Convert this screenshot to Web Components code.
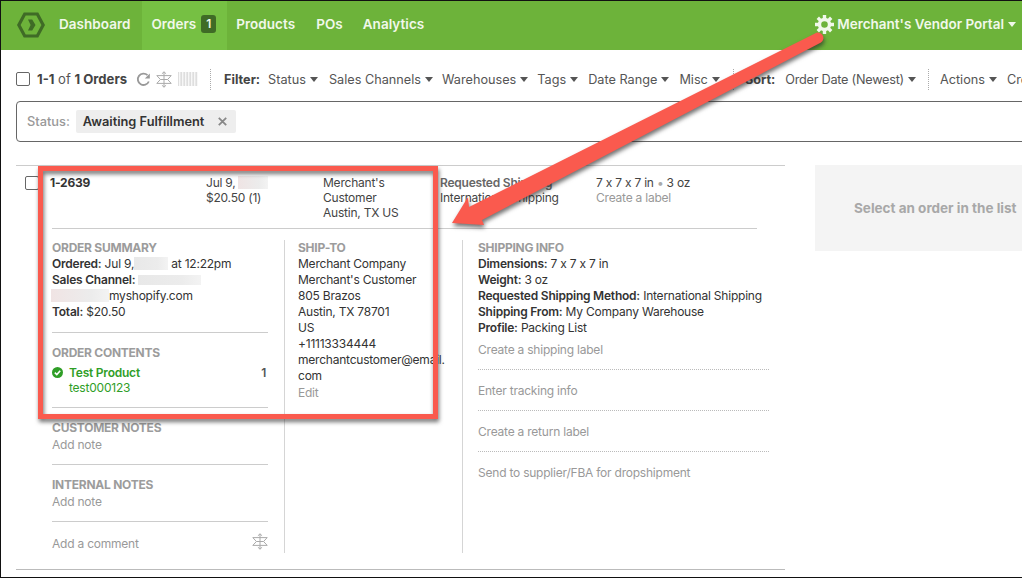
<!DOCTYPE html>
<html>
<head>
<meta charset="utf-8">
<title>Orders</title>
<style>
  html, body { margin: 0; padding: 0; background: #fff; }
  body { font-family: Inter, "Liberation Sans", sans-serif; font-size: 12px; letter-spacing: -.22px; color: #333; }
</style>
</head>
<body>
<vendor-app></vendor-app>

<script>
(function () {
    const SNOW = `<svg width="16" height="17" viewBox="0 0 16 17" fill="none" stroke="currentColor" stroke-width="1">
        <path d="M8 .8V16.2M5.900 2.800 8 .8l2.100 2M5.900 14.200 8 16.200l2.100-2"/>
        <path d="M.8 4.600h14.400L11.600 8.500l3.600 3.900H.8L4.400 8.500z"/>
        <path d="M4.400 8.500h7.200"/>
    </svg>`;

    class BaseElement extends HTMLElement {
        constructor() {
            super();
            this.attachShadow({ mode: "open" });
            this.shadowRoot.innerHTML = this.render();
        }
        render() {
            return "<slot></slot>";
        }
    }

    class NavItem extends BaseElement {
        render() {
            return `<style>
                :host { display: flex; align-items: center; height: 100%; padding: 0 var(--pr, 10px) 3px var(--pl, 10px); box-sizing: border-box;
                    color: #f1f8ea; font-weight: 600; font-size: 13.5px; letter-spacing: .03px; }
                :host([active]) { background: #76c043; }
                .badge { display: none; margin-left: 5px; width: 15px; height: 18px; line-height: 18px; border-radius: 3px;
                    background: #3f6b26; text-align: center; font-size: 12px; }
                :host([badge]) .badge { display: block; }
            </style><slot></slot><span class="badge">${this.getAttribute("badge") || ""}</span>`;
        }
    }

    class TopNav extends BaseElement {
        render() {
            return `<style>
                :host { display: flex; height: 49px; background: #6db33a; align-items: stretch; }
                .logo { margin: 11px 6px 0 16px; width: 28px; height: 26px; }
                .right { margin-left: auto; display: flex; align-items: center; padding: 0 6px 3px 0; color: #f1f8ea; font-weight: 600; font-size: 13.5px; letter-spacing: 0; }
                .gear { margin-right: 3px; }
                .caret { margin-left: 4px; border: 4.500px solid transparent; border-top: 5px solid #f1f8ea; border-bottom: 0; }
            </style>
            <svg class="logo" viewBox="0 0 28 26">
                <path d="M1.800 13 7.700 2h12.600l5.900 11-5.900 11H7.700z" fill="none" stroke="#3f6b26" stroke-width="3.200"/>
                <path d="M11 7.500h4.200l3.300 5.500-3.300 5.500H11l2.600-5.500z" fill="#3f6b26"/>
            </svg>
            <nav-item style="--pl:8px;--pr:12px">Dashboard</nav-item>
            <nav-item active badge="1" style="--pl:9px;--pr:11px">Orders</nav-item>
            <nav-item style="--pl:9px;--pr:9px">Products</nav-item>
            <nav-item style="--pl:12px;--pr:10px">POs</nav-item>
            <nav-item style="--pl:10px">Analytics</nav-item>
            <div class="right">
                <svg class="gear" width="19" height="19" viewBox="0 0 19 19">
                    <circle cx="9.500" cy="9.500" r="5" fill="none" stroke="#f1f8ea" stroke-width="3.400"/>
                    <g stroke="#f1f8ea" stroke-width="3.400">
                        <path d="M9.500 0v4M9.500 15v4M0 9.500h4M15 9.500h4M2.800 2.800l2.800 2.800M13.400 13.400l2.800 2.800M2.800 16.200l2.800-2.800M13.400 5.600l2.800-2.800"/>
                    </g>
                </svg>
                Merchant's Vendor Portal<span class="caret"></span>
            </div>`;
        }
    }

    class DropMenu extends BaseElement {
        render() {
            return `<style>
                :host { display: inline-flex; align-items: center; white-space: nowrap; color: #555; margin-right: 10px; }
                .caret { margin-left: 4px; border: 4.500px solid transparent; border-top: 5px solid #555; border-bottom: 0; }
            </style><slot></slot><span class="caret"></span>`;
        }
    }

    class OrderToolbar extends BaseElement {
        render() {
            return `<style>
                :host { display: flex; align-items: center; height: 51px; padding: 7px 0 0 15px; box-sizing: border-box; overflow: hidden; white-space: nowrap; color: #555;
                    font-size: 12.700px; letter-spacing: 0; }
                .box { width: 12px; height: 12px; border: 1px solid #666; border-radius: 2px; margin-right: 7px; flex: none; }
                .count { color: #555; margin-right: 9px; font-size: 13.100px; }
                .count b { font-weight: 700; color: #444; }
                .refresh { margin-right: 5px; flex: none; color: #999; }
                .snow { color: #aaa; display: flex; margin-right: 6px; }
                .bars { width: 20px; height: 14px; flex: none; opacity: .6;
                    background: repeating-linear-gradient(90deg, #c8c8c8 0 1px, #f2f2f2 1px 2px, #d8d8d8 2px 3px); }
                .sep { height: 21px; border-left: 1px dotted #aaa; margin: 0 13px 0 12px; flex: none; }
                .sep.b { margin: 0 11px 0 3px; }
                b.label { font-weight: 700; color: #444; margin-right: 8px; }
            </style>
            <span class="box"></span>
            <span class="count"><b>1-1</b> of <b>1 Orders</b></span>
            <svg class="refresh" width="15" height="15" viewBox="0 0 15 15" fill="none" stroke="currentColor" stroke-width="1.800">
                <path d="M12.800 9.500A5.700 5.700 0 1 1 11.500 3.200"/><path d="M13.800 1.500v5h-5z" fill="currentColor" stroke="none"/>
            </svg>
            <span class="snow">${SNOW}</span>
            <span class="bars"></span>
            <span class="sep"></span>
            <b class="label">Filter:</b>
            <drop-menu style="margin-right:11px">Status</drop-menu>
            <drop-menu style="margin-right:9px">Sales Channels</drop-menu>
            <drop-menu style="margin-right:9px">Warehouses</drop-menu>
            <drop-menu>Tags</drop-menu>
            <drop-menu>Date Range</drop-menu>
            <drop-menu>Misc</drop-menu>
            <span class="sep b"></span>
            <b class="label" style="margin-right:10px">Sort:</b>
            <drop-menu style="margin-right:0;letter-spacing:-.25px">Order Date (Newest)</drop-menu>
            <span class="sep" style="margin:0 11px 0 12px"></span>
            <drop-menu>Actions</drop-menu>
            <span>Create</span>`;
        }
    }

    class FilterBox extends BaseElement {
        render() {
            return `<style>
                :host { display: flex; align-items: center; height: 41px; box-sizing: border-box; margin: 0 -10px 0 15px;
                    border: 1px solid #666; border-radius: 4px; padding-left: 10px; font-size: 12.800px; letter-spacing: 0; }
                .key { color: #999; font-weight: 500; margin-right: 6px; }
                .chip { display: flex; align-items: center; height: 23px; background: #eee; border-radius: 2px; padding: 0 9px 0 7px; color: #333; font-weight: 600; }
                svg { margin-left: 14px; }
            </style>
            <span class="key">Status:</span>
            <span class="chip"><slot></slot>
                <svg width="9" height="9" viewBox="0 0 9 9" stroke="#888" stroke-width="1.800"><path d="M.8.8l7.400 7.400M8.200.8.800 8.200"/></svg>
            </span>`;
        }
    }

    class BlurBlock extends BaseElement {
        render() {
            return `<style>
                :host { display: inline-block; height: 13px; vertical-align: -2px;
                    background: linear-gradient(90deg, var(--c, #e8e8e8), #ececec 70%, #f3f3f3); }
            </style>`;
        }
    }

    class OrderRow extends BaseElement {
        render() {
            return `<style>
                :host { display: grid; grid-template-columns: 25px 156px 117px 117px 156px 1fr; line-height: 15px; padding: 9px 0 8px 9px; color: #444; }
                .box { width: 12px; height: 12px; border: 1px solid #666; border-radius: 2px; margin-top: 1px; }
            </style>
            <span class="box"></span>
            <slot></slot>`;
        }
    }

    class DetailSection extends BaseElement {
        render() {
            return `<style>
                :host { display: block; border-top: 1px solid #ccc; padding: 12px 0 10px; line-height: 16px; color: #333; }
                :host([first]) { border-top: 0; padding: 0 0 12px; }
                :host([plain]) { border-top: 0; padding: 0; }
                :host(:last-child) { padding-bottom: 0; }
                h4 { margin: 0; font-size: 12px; font-weight: 700; color: #9c9c9c; letter-spacing: -.25px; line-height: 16px; }
            </style>
            <h4>${this.getAttribute("heading") || ""}</h4>
            <slot></slot>`;
        }
    }

    class ActionLink extends BaseElement {
        render() {
            return `<style>
                :host { display: block; color: #999; line-height: 16px; padding: 13px 0 11px; border-bottom: 1px dotted #bbb; }
                :host(:first-child) { padding-top: 6px; }
                :host(:last-child) { border-bottom: 0; }
            </style><slot></slot>`;
        }
    }

    class OrderDetail extends BaseElement {
        render() {
            return `<style>
                :host { display: grid; column-gap: 0; grid-template-columns: 232px 178px 1fr; margin: 11px 0 17px 36px; height: 313px; }
                .col { box-sizing: border-box; min-height: 0; }
                .a { padding-right: 16px; }
                .b { border-left: 1px solid #d5d5d5; padding-left: 13px; }
                .c { border-left: 1px solid #d5d5d5; padding: 0 16px 0 15px; }
                .green { color: #2f9e27; }
                .product { display: grid; grid-template-columns: 17px 1fr auto; margin-top: 4px; line-height: 15px; }
                .product b { font-weight: 600; }
                .qty { font-weight: 600; color: #555; padding-right: 2px; }
                .check { margin-top: 2px; }
                .sku { grid-column: 2; }
                .add { display: block; margin: 1px 0; color: #999; }
                .comment { display: flex; justify-content: space-between; color: #999; padding-top: 2px; align-items: flex-start; }
                .comment span { color: #aaa; margin-top: -3px; display: flex; }
                .email { word-break: break-all; width: 150px; }
                .edit { color: #999; margin-top: 1px; }
                b { font-weight: 600; }
            </style>
            <div class="col a">
                <detail-section first heading="ORDER SUMMARY">
                    <div><b>Ordered:</b> Jul 9,<blur-block style="width:34px"></blur-block> at 12:22pm</div>
                    <div><b>Sales Channel:</b> <blur-block style="width:63px;height:10px;vertical-align:-1px"></blur-block></div>
                    <div><blur-block style="width:58px;--c:#f0e4e4;margin-left:-1px"></blur-block>myshopify.com</div>
                    <div><b>Total:</b> $20.50</div>
                </detail-section>
                <detail-section heading="ORDER CONTENTS" style="padding-bottom:12px">
                    <div class="product green">
                        <svg class="check" width="11" height="11" viewBox="0 0 11 11"><circle cx="5.500" cy="5.500" r="5.500" fill="#2f9e27"/><path d="M2.800 5.700 4.800 7.600 8.200 3.800" fill="none" stroke="#fff" stroke-width="1.600"/></svg>
                        <b>Test Product</b>
                        <span class="qty">1</span>
                        <span class="sku">test000123</span>
                    </div>
                </detail-section>
                <detail-section heading="CUSTOMER NOTES"><span class="add">Add note</span></detail-section>
                <detail-section heading="INTERNAL NOTES"><span class="add">Add note</span></detail-section>
                <detail-section>
                    <div class="comment">Add a comment<span>${SNOW}</span></div>
                </detail-section>
            </div>
            <div class="col b">
                <detail-section plain heading="SHIP-TO">
                    <div>Merchant Company</div>
                    <div>Merchant's Customer</div>
                    <div>805 Brazos</div>
                    <div>Austin, TX 78701</div>
                    <div>US</div>
                    <div>+11113334444</div>
                    <div class="email">merchantcustomer@email.com</div>
                    <div class="edit">Edit</div>
                </detail-section>
            </div>
            <div class="col c">
                <detail-section plain heading="SHIPPING INFO">
                    <div><b>Dimensions:</b> 7 x 7 x 7 in</div>
                    <div><b>Weight:</b> 3 oz</div>
                    <div><b>Requested Shipping Method:</b> International Shipping</div>
                    <div><b>Shipping From:</b> My Company Warehouse</div>
                    <div><b>Profile:</b> Packing List</div>
                </detail-section>
                <div>
                    <action-link>Create a shipping label</action-link>
                    <action-link>Enter tracking info</action-link>
                    <action-link>Create a return label</action-link>
                    <action-link>Send to supplier/FBA for dropshipment</action-link>
                </div>
            </div>`;
        }
    }

    class OrderList extends BaseElement {
        render() {
            return `<style>
                :host { display: block; flex: none; width: 769px; margin-left: 15px; border-top: 1px solid #ccc; border-bottom: 1px solid #bbb; height: 405px; box-sizing: border-box; }
                .rule { height: 1px; background: #ccc; margin-left: 36px; width: 705px; }
            </style>
            <order-row>
                <b style="font-weight:700;color:#333">1-2639</b>
                <div>Jul 9, <blur-block style="width:30px;--c:#efe4e4;margin-left:-1px"></blur-block><br>$20.50 (1)</div>
                <div>Merchant's<br>Customer<br>Austin, TX US</div>
                <div><b style="font-weight:600;color:#666">Requested Shipping</b><br>International Shipping</div>
                <div>7 x 7 x 7 in <span style="color:#aaa">•</span> 3 oz<br><span style="color:#999">Create a label</span></div>
            </order-row>
            <div class="rule"></div>
            <order-detail></order-detail>`;
        }
    }

    class EmptyPanel extends BaseElement {
        render() {
            return `<style>
                :host { display: flex; align-items: center; flex: none; width: 230px; height: 86px; margin-left: 30px; padding-left: 39px; padding-bottom: 1px; box-sizing: border-box;
                    background: #f4f4f4; color: #a8a8a8; font-weight: 700; white-space: nowrap; font-size: 13.500px; letter-spacing: 0; }
            </style><slot></slot>`;
        }
    }

    // red box and arrow drawn on top of the screenshot
    class CalloutOverlay extends BaseElement {
        render() {
            return `<style>
                :host { position: absolute; left: -1px; top: -1px; width: 1022px; height: 578px; pointer-events: none; }
                svg { display: block; filter: drop-shadow(1px 3px 2px rgba(40,40,40,.65)); }
            </style>
            <svg width="1022" height="578" viewBox="0 0 1022 578">
                <rect x="40.500" y="168.500" width="395" height="248" fill="none" stroke="#fa5a4e" stroke-width="5"/>
                <path d="M815 33.500 469 207 468 197 452 223 484 225 482 220 821 42.500A5 5 0 0 0 815 33.500Z" fill="#fa5a4e"/>
            </svg>`;
        }
    }

    class VendorApp extends BaseElement {
        render() {
            return `<style>
                :host { display: block; position: relative; width: 1022px; height: 578px; box-sizing: border-box; overflow: hidden;
                    border-top: 1px solid #111; border-left: 1px solid #111; border-bottom: 1px solid #111; }
                .main { display: flex; margin-top: 23px; }
            </style>
            <top-nav></top-nav>
            <order-toolbar></order-toolbar>
            <filter-box>Awaiting Fulfillment</filter-box>
            <div class="main">
                <order-list></order-list>
                <empty-panel>Select an order in the list</empty-panel>
            </div>
            <callout-overlay></callout-overlay>`;
        }
    }

    customElements.define("blur-block", BlurBlock);
    customElements.define("nav-item", NavItem);
    customElements.define("top-nav", TopNav);
    customElements.define("drop-menu", DropMenu);
    customElements.define("order-toolbar", OrderToolbar);
    customElements.define("filter-box", FilterBox);
    customElements.define("order-row", OrderRow);
    customElements.define("detail-section", DetailSection);
    customElements.define("action-link", ActionLink);
    customElements.define("order-detail", OrderDetail);
    customElements.define("order-list", OrderList);
    customElements.define("empty-panel", EmptyPanel);
    customElements.define("callout-overlay", CalloutOverlay);
    customElements.define("vendor-app", VendorApp);
})();
</script>
</body>
</html>
